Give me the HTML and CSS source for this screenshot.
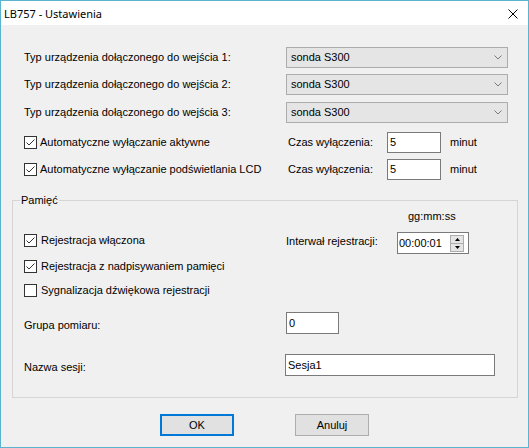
FILE: index.html
```html
<!DOCTYPE html>
<html lang="pl">
<head>
<meta charset="utf-8">
<title>LB757 - Ustawienia</title>
<link rel="stylesheet" href="styles.css">
</head>
<body>
<div class="window">
  <div class="titlebar">
    <span class="title">LB757 - Ustawienia</span>
    <svg class="close" width="10" height="10" viewBox="0 0 10 10"><path d="M0.5 0.5L9.5 9.5M9.5 0.5L0.5 9.5" stroke="#000" stroke-width="1" fill="none"/></svg>
  </div>
  <div class="content">
    <div class="top">
      <div class="row">
        <span class="lbl">Typ urządzenia dołączonego do wejścia 1:</span>
        <div class="combo"><span>sonda S300</span><svg width="8" height="5" viewBox="0 0 8 5"><path d="M0.5 0.5L4 4L7.5 0.5" stroke="#7a7a7a" fill="none"/></svg></div>
      </div>
      <div class="row">
        <span class="lbl">Typ urządzenia dołączonego do wejścia 2:</span>
        <div class="combo"><span>sonda S300</span><svg width="8" height="5" viewBox="0 0 8 5"><path d="M0.5 0.5L4 4L7.5 0.5" stroke="#7a7a7a" fill="none"/></svg></div>
      </div>
      <div class="row r3">
        <span class="lbl">Typ urządzenia dołączonego do wejścia 3:</span>
        <div class="combo"><span>sonda S300</span><svg width="8" height="5" viewBox="0 0 8 5"><path d="M0.5 0.5L4 4L7.5 0.5" stroke="#7a7a7a" fill="none"/></svg></div>
      </div>
      <div class="row r4">
        <div class="check"><span class="box"><svg width="11" height="11" viewBox="0 0 11 11"><path d="M1.5 5.5L4 8L9.5 2.5" stroke="#333" fill="none"/></svg></span><span>Automatyczne wyłączanie aktywne</span></div>
        <div class="timer"><span class="tlab">Czas wyłączenia:</span><span class="edit tedit">5</span><span class="unit">minut</span></div>
      </div>
      <div class="row">
        <div class="check"><span class="box"><svg width="11" height="11" viewBox="0 0 11 11"><path d="M1.5 5.5L4 8L9.5 2.5" stroke="#333" fill="none"/></svg></span><span>Automatyczne wyłączanie podświetlania LCD</span></div>
        <div class="timer"><span class="tlab">Czas wyłączenia:</span><span class="edit tedit">5</span><span class="unit">minut</span></div>
      </div>
    </div>

    <fieldset class="group">
      <legend>Pamięć</legend>
      <div class="gbody">
        <div class="grow ga">
          <span></span>
          <span class="gg">gg:mm:ss</span>
        </div>
        <div class="grow gb">
          <div class="check gcheck"><span class="box"><svg width="11" height="11" viewBox="0 0 11 11"><path d="M1.5 5.5L4 8L9.5 2.5" stroke="#333" fill="none"/></svg></span><span>Rejestracja włączona</span></div>
          <div class="interval">
            <span class="ilab">Interwał rejestracji:</span>
            <div class="spin">
              <span class="stext">00:00:01</span>
              <span class="sbtns">
                <span class="sbtn"><svg width="5" height="3" viewBox="0 0 5 3"><path d="M0 3L2.5 0L5 3Z" fill="#000"/></svg></span>
                <span class="sbtn"><svg width="5" height="3" viewBox="0 0 5 3"><path d="M0 0L2.5 3L5 0Z" fill="#000"/></svg></span>
              </span>
            </div>
          </div>
        </div>
        <div class="grow gc">
          <div class="check gcheck"><span class="box"><svg width="11" height="11" viewBox="0 0 11 11"><path d="M1.5 5.5L4 8L9.5 2.5" stroke="#333" fill="none"/></svg></span><span>Rejestracja z nadpisywaniem pamięci</span></div>
        </div>
        <div class="grow gd">
          <div class="check gcheck"><span class="box"></span><span>Sygnalizacja dźwiękowa rejestracji</span></div>
        </div>
        <div class="grow ge">
          <span class="flab">Grupa pomiaru:</span>
          <span class="edit gedit">0</span>
        </div>
        <div class="grow gf">
          <span class="flab">Nazwa sesji:</span>
          <span class="edit nedit">Sesja1</span>
        </div>
      </div>
    </fieldset>

    <div class="buttons">
      <button class="btn default">OK</button>
      <button class="btn">Anuluj</button>
    </div>
  </div>
</div>
</body>
</html>
```

FILE: styles.css
```css
* { box-sizing: border-box; }
html, body { margin: 0; padding: 0; }
body {
  background: #f0f0f0;
  font-family: "Liberation Sans", Arial, sans-serif;
  font-size: 11px;
  line-height: 13px;
  color: #000;
}
.window {
  width: 529px;
  height: 448px;
  border: 1px solid #5ab3cf;
  display: flex;
  flex-direction: column;
  background: #f0f0f0;
}
.titlebar {
  height: 24px;
  background: #fff;
  display: flex;
  align-items: center;
  justify-content: space-between;
  padding: 0 10px 0 3px;
  flex: none;
}
.title {
  font-family: "Noto Sans", "Open Sans", sans-serif;
  font-size: 11px;
  line-height: 16px;
  margin-top: 1px;
}
.close { display: block; margin-top: 1px; }
.content { flex: 1; display: flex; flex-direction: column; }

.top { display: flex; flex-direction: column; padding: 22px 0 0 23px; }
.row { display: grid; grid-template-columns: 262px 222px; align-items: center; }
.row + .row { margin-top: 6px; }
.row.r3 { margin-top: 7px; }
.row.r4 { margin-top: 9px; }
.combo {
  height: 21px;
  border: 1px solid #acacac;
  background: #e5e5e5;
  display: flex;
  align-items: center;
  justify-content: space-between;
  padding: 0 5px 0 4px;
}
.combo svg { display: block; }

.check { display: flex; align-items: center; }
.box {
  width: 13px;
  height: 13px;
  border: 1px solid #333;
  background: #fff;
  margin-right: 3px;
  flex: none;
}
.box svg { display: block; }

.timer { display: flex; align-items: center; padding-left: 2px; }
.tlab { width: 99px; }
.edit {
  height: 21px;
  border: 1px solid #7a7a7a;
  background: #fff;
  padding-left: 2px;
  display: flex;
  align-items: center;
}
.tedit { width: 54px; }
.unit { margin-left: 9px; }

.group {
  margin: 14px 10px 0 11px;
  padding: 0 0 21px 0;
  border: 1px solid #d5d5d5;
  min-width: 0;
}
.group legend {
  margin-left: 7px;
  padding: 0 1px;
  line-height: 13px;
}
.gbody { padding: 3px 0 0 11px; }
.grow { display: grid; grid-template-columns: 262px auto; align-items: start; }
.gg { padding-left: 122px; }
.gb { margin-top: 9px; }
.gb .gcheck { margin-top: 2px; }
.gcheck .box { margin-right: 4px; }
.interval { display: flex; align-items: flex-start; }
.ilab { width: 111px; margin-top: 3px; }
.spin {
  width: 72px;
  height: 22px;
  border: 1px solid #7a7a7a;
  background: #fff;
  display: flex;
  align-items: center;
  justify-content: space-between;
  padding: 0 4px 0 1px;
}
.sbtns { display: flex; flex-direction: column; width: 14px; }
.sbtn {
  height: 9px;
  background: #e5e5e5;
  border: 1px solid #acacac;
  display: flex;
  align-items: center;
  justify-content: center;
}
.sbtn + .sbtn { border-top: none; height: 8px; }
.sbtn svg { display: block; }
.gc { margin-top: 6px; }
.gd { margin-top: 11px; }
.ge { margin-top: 15px; align-items: center; }
.gf { margin-top: 20px; align-items: center; }
.flab { padding-top: 4px; }
.gedit { width: 53px; height: 22px; }
.nedit { width: 210px; height: 22px; margin-left: -1px; }

.buttons { display: flex; gap: 61px; padding-left: 159px; margin-top: 16px; }
.btn {
  width: 74px;
  height: 22px;
  font: inherit;
  color: #000;
  background: #e1e1e1;
  border: 1px solid #adadad;
  padding: 0;
  margin: 0;
}
.btn.default { border: 2px solid #0078d7; }
```
